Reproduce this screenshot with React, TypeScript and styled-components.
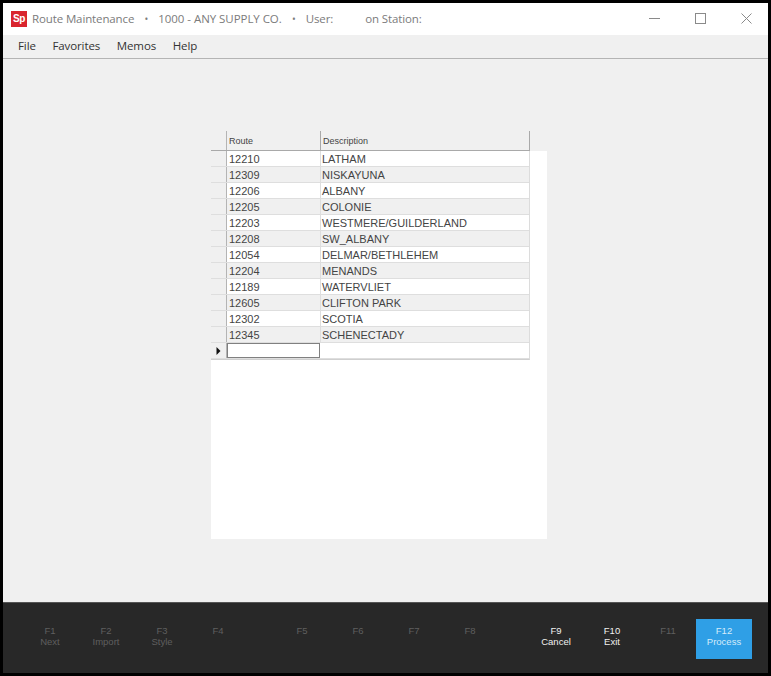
import styled, { createGlobalStyle } from "styled-components";

const GlobalStyle = createGlobalStyle`
  html, body {
    margin: 0;
    padding: 0;
    background: #000;
  }
`;

const Window = styled.div`
  box-sizing: border-box;
  width: 771px;
  height: 676px;
  border: 3px solid #000;
  display: flex;
  flex-direction: column;
  background: #f0f0f0;
  font-family: "Open Sans", "Noto Sans", sans-serif;
  overflow: hidden;
`;

const TitleBar = styled.div`
  height: 32px;
  flex: none;
  box-sizing: border-box;
  background: #fff;
  display: flex;
  align-items: center;
  padding: 0 0 1px 8px;
  color: #7b7b7b;
  font-size: 11.5px;
  letter-spacing: -0.12px;
`;

const Logo = styled.div`
  width: 16px;
  height: 16px;
  background: #d9252e;
  color: #fff;
  font-family: "Liberation Sans", sans-serif;
  font-weight: 700;
  font-size: 10px;
  line-height: 16px;
  text-align: center;
  margin-right: 5px;
  letter-spacing: -0.3px;
`;

const TitlePart = styled.span<{ $gap?: number; $spacing?: number }>`
  white-space: pre;
  margin-left: ${(p) => p.$gap ?? 0}px;
  letter-spacing: ${(p) => p.$spacing ?? -0.12}px;
`;

const TitleDot = styled.span`
  width: 24px;
  flex: none;
  text-align: center;
  font-size: 10px;
`;

const WindowButtons = styled.div`
  margin-left: auto;
  margin-right: -1px;
  display: flex;
  height: 100%;
`;

const WindowButton = styled.div`
  width: 46px;
  height: 100%;
  display: flex;
  align-items: center;
  justify-content: center;
  color: #8a8a8a;
`;

const MenuBar = styled.div`
  height: 21px;
  flex: none;
  box-sizing: content-box;
  display: flex;
  align-items: center;
  padding: 0 0 2px 15px;
  gap: 16.6px;
  font-size: 11.5px;
  letter-spacing: -0.1px;
  color: #333;
  border-bottom: 1px solid #b4b4b4;
`;

const Content = styled.div`
  flex: 1;
  padding: 72px 0 0 208px;
`;

const GridHeader = styled.div`
  display: flex;
  width: 319px;
  height: 20px;
  box-sizing: border-box;
  background: #f0f0f0;
  border-bottom: 1px solid #a9a9a9;
`;

const HeaderCorner = styled.div`
  width: 16px;
  flex: none;
  box-sizing: border-box;
  border-right: 1px solid #b4b4b4;
`;

const HeaderCell = styled.div<{ $w: number }>`
  width: ${(p) => p.$w}px;
  flex: none;
  box-sizing: border-box;
  border-right: 1px solid #a9a9a9;
  padding-left: 2px;
  font-family: "Liberation Sans", sans-serif;
  font-size: 9px;
  line-height: 20px;
  color: #444;
`;

const Panel = styled.div`
  width: 336px;
  height: 388px;
  background: #fff;
`;

const Rows = styled.div`
  width: 319px;
  box-sizing: border-box;
  border-bottom: 1px solid #cfcfcf;
  border-right: 1px solid #dcdcdc;
`;

const Row = styled.div<{ $alt: boolean }>`
  display: flex;
  height: 16px;
  box-sizing: border-box;
  border-bottom: 1px solid #dedede;
  background: ${(p) => (p.$alt ? "#f0f0f0" : "#fff")};
  font-family: "Liberation Sans", sans-serif;
  font-size: 11px;
  line-height: 16px;
  color: #444;
`;

const RowHead = styled.div`
  width: 16px;
  flex: none;
  box-sizing: border-box;
  background: #f0f0f0;
  border-right: 1px solid #b4b4b4;
  display: flex;
  align-items: center;
  justify-content: center;
`;

const Cell = styled.div<{ $w?: number; $pad: number }>`
  box-sizing: border-box;
  width: ${(p) => (p.$w ? `${p.$w}px` : "auto")};
  flex: ${(p) => (p.$w ? "none" : "1")};
  padding-left: ${(p) => p.$pad}px;
  border-right: ${(p) => (p.$w ? "1px solid #dedede" : "none")};
`;

const ActiveCell = styled.div`
  width: 93px;
  flex: none;
  box-sizing: border-box;
  border: 1px solid #808080;
  background: #fff;
`;

const Footer = styled.div`
  height: 71px;
  flex: none;
  background: #282828;
  border-top: 1px solid #555;
  box-sizing: border-box;
  display: flex;
  padding: 16px 0 0 19px;
  font-family: "Liberation Sans", sans-serif;
  font-size: 9.5px;
  line-height: 11px;
`;

const KeyGroup = styled.div<{ $gap: number }>`
  display: flex;
  margin-right: ${(p) => p.$gap}px;
`;

const FnKey = styled.div<{ $on?: boolean; $primary?: boolean }>`
  width: 56px;
  height: 40px;
  box-sizing: border-box;
  padding-top: 6px;
  display: flex;
  flex-direction: column;
  align-items: center;
  color: ${(p) => (p.$primary ? "#d5ebfa" : p.$on ? "#f0f0f0" : "#5f5f5f")};
  background: ${(p) => (p.$primary ? "#2f9fe6" : "transparent")};
`;

const routes = [
  ["12210", "LATHAM"],
  ["12309", "NISKAYUNA"],
  ["12206", "ALBANY"],
  ["12205", "COLONIE"],
  ["12203", "WESTMERE/GUILDERLAND"],
  ["12208", "SW_ALBANY"],
  ["12054", "DELMAR/BETHLEHEM"],
  ["12204", "MENANDS"],
  ["12189", "WATERVLIET"],
  ["12605", "CLIFTON PARK"],
  ["12302", "SCOTIA"],
  ["12345", "SCHENECTADY"],
];

export default function App() {
  return (
    <>
      <GlobalStyle />
      <Window>
        <TitleBar>
          <Logo>Sp</Logo>
          <TitlePart>Route Maintenance</TitlePart>
          <TitleDot>•</TitleDot>
          <TitlePart $spacing={-0.05}>1000 - ANY SUPPLY CO.</TitlePart>
          <TitleDot>•</TitleDot>
          <TitlePart>User:</TitlePart>
          <TitlePart $gap={32}>on Station:</TitlePart>
          <WindowButtons>
            <WindowButton>
              <svg width="11" height="11" viewBox="0 0 11 11">
                <path d="M0 5.5H11" stroke="currentColor" fill="none" />
              </svg>
            </WindowButton>
            <WindowButton>
              <svg width="11" height="11" viewBox="0 0 11 11">
                <rect x="0.5" y="0.5" width="10" height="10" stroke="currentColor" fill="none" />
              </svg>
            </WindowButton>
            <WindowButton>
              <svg width="11" height="11" viewBox="0 0 11 11">
                <path d="M0.5 0.5L10.5 10.5M10.5 0.5L0.5 10.5" stroke="currentColor" fill="none" />
              </svg>
            </WindowButton>
          </WindowButtons>
        </TitleBar>
        <MenuBar>
          <span>File</span>
          <span>Favorites</span>
          <span>Memos</span>
          <span>Help</span>
        </MenuBar>
        <Content>
          <GridHeader>
            <HeaderCorner />
            <HeaderCell $w={94}>Route</HeaderCell>
            <HeaderCell $w={209}>Description</HeaderCell>
          </GridHeader>
          <Panel>
            <Rows>
              {routes.map(([code, name], i) => (
                <Row key={code} $alt={i % 2 === 1}>
                  <RowHead />
                  <Cell $w={94} $pad={2}>
                    {code}
                  </Cell>
                  <Cell $pad={1}>{name}</Cell>
                </Row>
              ))}
              <Row $alt={false}>
                <RowHead>
                  <svg width="5" height="8" viewBox="0 0 5 8">
                    <path d="M0.5 0L4.5 4L0.5 8Z" fill="#111" />
                  </svg>
                </RowHead>
                <ActiveCell />
                <Cell $pad={1} />
              </Row>
            </Rows>
          </Panel>
        </Content>
        <Footer>
          <KeyGroup $gap={28}>
            <FnKey>
              <span>F1</span>
              <span>Next</span>
            </FnKey>
            <FnKey>
              <span>F2</span>
              <span>Import</span>
            </FnKey>
            <FnKey>
              <span>F3</span>
              <span>Style</span>
            </FnKey>
            <FnKey>
              <span>F4</span>
            </FnKey>
          </KeyGroup>
          <KeyGroup $gap={30}>
            <FnKey>
              <span>F5</span>
            </FnKey>
            <FnKey>
              <span>F6</span>
            </FnKey>
            <FnKey>
              <span>F7</span>
            </FnKey>
            <FnKey>
              <span>F8</span>
            </FnKey>
          </KeyGroup>
          <KeyGroup $gap={0}>
            <FnKey $on>
              <span>F9</span>
              <span>Cancel</span>
            </FnKey>
            <FnKey $on>
              <span>F10</span>
              <span>Exit</span>
            </FnKey>
            <FnKey>
              <span>F11</span>
            </FnKey>
            <FnKey $primary>
              <span>F12</span>
              <span>Process</span>
            </FnKey>
          </KeyGroup>
        </Footer>
      </Window>
    </>
  );
}
